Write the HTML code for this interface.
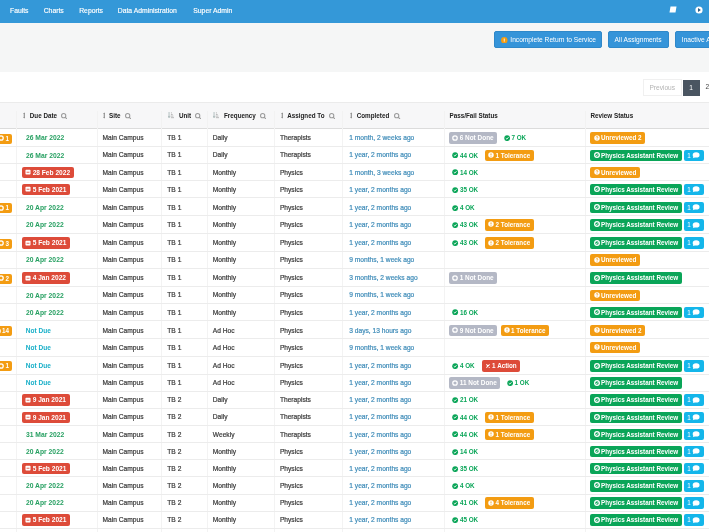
<!DOCTYPE html>
<html><head><meta charset="utf-8">
<style>
*{box-sizing:border-box;margin:0;padding:0}
html,body{width:709px;height:532px;overflow:hidden;background:#fff;-webkit-font-smoothing:antialiased;font-family:"Liberation Sans",sans-serif;color:#333}
.nav{position:absolute;left:0;top:0;width:709px;height:22.5px;background:#3498d8}
.nav span{position:absolute;top:6.8px;color:#fff;font-size:6.8px;line-height:8px;-webkit-text-stroke-width:0.15px}
.tool{position:absolute;left:0;top:22.5px;width:709px;height:49.6px;background:#f5f6f6}
.btn{position:absolute;top:31.4px;height:17px;background:#3594d9;border:1px solid #2f88c9;border-radius:2px;color:#fff;font-size:6.65px;line-height:15px;padding-left:6px;white-space:nowrap}
.pg{position:absolute;top:72px;left:0;width:709px;height:30.3px;background:#fff}
.prev{position:absolute;left:643px;top:79.2px;width:38.5px;height:17px;border:1px solid #f0f0f0;color:#b4b4b4;font-size:6.6px;line-height:15px;text-align:center;background:#fff}
.p1{position:absolute;left:682.5px;top:79.6px;width:17.2px;height:16.3px;background:#4a5561;color:#fff;font-size:6.6px;line-height:16px;text-align:center}
.p2{position:absolute;left:705.5px;top:79.4px;color:#444;font-size:6.6px;line-height:16px}
.hdr{position:absolute;left:0;top:102.3px;width:709px;height:26.7px;background:#f7f7f8;border-bottom:1px solid #dcdcdc;border-top:1px solid #ebebeb}
.hc{position:absolute;top:110.9px;font-size:6.3px;font-weight:bold;color:#222;line-height:9px;white-space:nowrap}
.row{position:absolute;left:0;width:709px;border-bottom:1px solid #ececec}
.c{position:absolute;top:0;height:100%;padding-left:5.5px;padding-top:0.5px;font-size:6.65px;line-height:inherit;white-space:nowrap;overflow:visible;color:#383838;-webkit-text-stroke-width:0.2px}
.vl{position:absolute;top:103px;height:436px;width:1px;background:linear-gradient(#f7f7f8 0,#f7f7f8 8px,#f2f2f2 8px,#f2f2f2 25px,#f3f3f3 25px)}
.hs{position:absolute;top:112.2px;width:2.6px;height:7px}
.ha{position:absolute;top:112.4px;width:6.2px;height:6.2px}
.hq{position:absolute;top:112.6px;width:6.4px;height:6.4px}
.lk{color:#3f8cb8;padding-left:6.5px}
.lb{display:inline-block;height:11.5px;line-height:11.5px;padding:0 3.6px;border-radius:2px;font-size:6.3px;font-weight:bold;vertical-align:middle;color:#fff;white-space:nowrap;position:relative;top:-0.4px;-webkit-text-stroke-width:0}
.i{width:6px;height:6px;vertical-align:-0.4px;margin-right:1.2px;margin-left:-0.3px}
.ic{width:8px;height:6.6px;vertical-align:-1px;margin-left:1.5px}
.okt{color:#0aa558;background:transparent}
.c7 .lb+.lb{margin-left:1.5px}
.okt .i{width:6.3px;height:6.3px;vertical-align:-1px}
.nd{background:#b4b8c5;color:#fff;font-size:6.45px}
.tol,.unrev{background:#f39c12}
.act,.dr{background:#dd4b39}
.par{background:#0aa558}
.cm{background:#14b6ea;font-weight:normal}
.dg{color:#27a062;background:transparent;font-size:6.75px;padding-left:3.8px}
.dr{font-size:6.6px}
.db{color:#18afc8;background:transparent;font-size:6.55px;padding-left:3.5px}
.dr{}
.lft{background:#f39c12;height:10px;line-height:10px;position:absolute;right:4.7px;top:4.9px;padding:0 2.4px 0 3px}
.c0{padding:0}
.c0{left:0px;width:16.2px}
.c1{left:16.2px;width:80.8px}
.c2{left:97px;width:64.8px}
.c3{left:161.8px;width:45.5px}
.c4{left:207.3px;width:67.1px}
.c5{left:274.4px;width:68.4px}
.c6{left:342.8px;width:101.7px}
.c7{left:444.5px;width:141.3px}
.c8{left:585.8px;width:123.2px}
.c7,.c8{padding-left:4.7px}
.c1{padding-left:6px}
</style></head><body><div id="w" style="position:absolute;left:0;top:0;width:709px;height:532px;will-change:transform">
<div class="nav">
<span style="left:10px">Faults</span>
<span style="left:43.7px">Charts</span>
<span style="left:79.2px">Reports</span>
<span style="left:117.8px">Data Administration</span>
<span style="left:193.3px">Super Admin</span>
<svg style="position:absolute;left:669px;top:6px" width="8" height="7" viewBox="0 0 8 7"><path d="M1.5 0.5 H7.5 L6.5 6.5 H0.5 Z" fill="#fff"/></svg>
<svg style="position:absolute;left:695px;top:6px" width="8" height="8" viewBox="0 0 8 8"><circle cx="4" cy="4" r="3.6" fill="#fff"/><path d="M3 2.1 L5.9 4 L3 5.9 Z" fill="#2d5f86"/></svg>
</div>
<div class="tool"></div>
<div class="btn" style="left:494.2px;width:108px"><svg style="width:6.5px;height:6.5px;vertical-align:-1px;margin-right:2.6px" viewBox="0 0 10 10"><circle cx="5" cy="5" r="5" fill="#f39c12"/><path d="M5 2.4 V6 M5 6.8 V7.8" stroke="#fff" stroke-width="1.4"/></svg>Incomplete Return to Service</div>
<div class="btn" style="left:607.6px;width:61.7px">All Assignments</div>
<div class="btn" style="left:674.8px;width:60px">Inactive Assignments</div>
<div class="pg"></div>
<div class="prev">Previous</div>
<div class="p1">1</div>
<div class="p2">2</div>
<div class="hdr"></div>
<div class="vl" style="left:15.7px"></div><div class="vl" style="left:96.5px"></div><div class="vl" style="left:161.3px"></div><div class="vl" style="left:206.8px"></div><div class="vl" style="left:273.9px"></div><div class="vl" style="left:342.3px"></div><div class="vl" style="left:444.0px"></div><div class="vl" style="left:585.3px"></div>
<svg class="hs" style="left:22.9px" viewBox="0 0 3 7"><path d="M1.5 0 L3 1.8 H0 Z M1.5 7 L3 5.2 H0 Z" fill="#909090"/><rect x="0.85" y="1.5" width="1.3" height="4" fill="#909090"/></svg><svg class="hq" style="left:61px" viewBox="0 0 6 6"><circle cx="2.5" cy="2.5" r="2" stroke="#9c9c9c" stroke-width="1" fill="none"/><path d="M3.9 3.9 L5.6 5.6" stroke="#9c9c9c" stroke-width="1.1"/></svg><svg class="hs" style="left:102.8px" viewBox="0 0 3 7"><path d="M1.5 0 L3 1.8 H0 Z M1.5 7 L3 5.2 H0 Z" fill="#909090"/><rect x="0.85" y="1.5" width="1.3" height="4" fill="#909090"/></svg><svg class="hq" style="left:125px" viewBox="0 0 6 6"><circle cx="2.5" cy="2.5" r="2" stroke="#9c9c9c" stroke-width="1" fill="none"/><path d="M3.9 3.9 L5.6 5.6" stroke="#9c9c9c" stroke-width="1.1"/></svg><svg class="ha" style="left:168.2px" viewBox="0 0 7 7"><path d="M1.2 0 V5.6 M0 4.4 L1.2 6.6 L2.4 4.4" stroke="#9aa" stroke-width="0.8" fill="none"/><path d="M3.3 1 H4.5 M3.3 2.8 H5.3 M3.3 4.6 H6.1 M3.3 6.4 H6.9" stroke="#aaa" stroke-width="0.9"/></svg><svg class="hq" style="left:195px" viewBox="0 0 6 6"><circle cx="2.5" cy="2.5" r="2" stroke="#9c9c9c" stroke-width="1" fill="none"/><path d="M3.9 3.9 L5.6 5.6" stroke="#9c9c9c" stroke-width="1.1"/></svg><svg class="ha" style="left:213.2px" viewBox="0 0 7 7"><path d="M1.2 0 V5.6 M0 4.4 L1.2 6.6 L2.4 4.4" stroke="#9aa" stroke-width="0.8" fill="none"/><path d="M3.3 1 H4.5 M3.3 2.8 H5.3 M3.3 4.6 H6.1 M3.3 6.4 H6.9" stroke="#aaa" stroke-width="0.9"/></svg><svg class="hq" style="left:260px" viewBox="0 0 6 6"><circle cx="2.5" cy="2.5" r="2" stroke="#9c9c9c" stroke-width="1" fill="none"/><path d="M3.9 3.9 L5.6 5.6" stroke="#9c9c9c" stroke-width="1.1"/></svg><svg class="hs" style="left:280.5px" viewBox="0 0 3 7"><path d="M1.5 0 L3 1.8 H0 Z M1.5 7 L3 5.2 H0 Z" fill="#909090"/><rect x="0.85" y="1.5" width="1.3" height="4" fill="#909090"/></svg><svg class="hq" style="left:329px" viewBox="0 0 6 6"><circle cx="2.5" cy="2.5" r="2" stroke="#9c9c9c" stroke-width="1" fill="none"/><path d="M3.9 3.9 L5.6 5.6" stroke="#9c9c9c" stroke-width="1.1"/></svg><svg class="hs" style="left:349.7px" viewBox="0 0 3 7"><path d="M1.5 0 L3 1.8 H0 Z M1.5 7 L3 5.2 H0 Z" fill="#909090"/><rect x="0.85" y="1.5" width="1.3" height="4" fill="#909090"/></svg><svg class="hq" style="left:394.3px" viewBox="0 0 6 6"><circle cx="2.5" cy="2.5" r="2" stroke="#9c9c9c" stroke-width="1" fill="none"/><path d="M3.9 3.9 L5.6 5.6" stroke="#9c9c9c" stroke-width="1.1"/></svg>
<div class="hc" style="left:29.8px">Due Date</div>
<div class="hc" style="left:109px">Site</div>
<div class="hc" style="left:178.9px">Unit</div>
<div class="hc" style="left:224px">Frequency</div>
<div class="hc" style="left:287.2px">Assigned To</div>
<div class="hc" style="left:356.7px">Completed</div>
<div class="hc" style="left:449.5px">Pass/Fail Status</div>
<div class="hc" style="left:590.5px">Review Status</div>
<div class="row" style="top:128.85px;height:18.11px;line-height:17.11px"><div class="c c0"><span class="lb lft"><svg class="i" viewBox="0 0 10 10"><circle cx="5" cy="5" r="3.7" stroke="#fff" stroke-width="2.1" fill="none"/></svg>1</span></div><div class="c c1"><span class="lb dg">26 Mar 2022</span></div><div class="c c2">Main Campus</div><div class="c c3">TB 1</div><div class="c c4">Daily</div><div class="c c5">Therapists</div><div class="c c6 lk">1 month, 2 weeks ago</div><div class="c c7"><span class="lb nd"><svg class="i" viewBox="0 0 10 10"><circle cx="5" cy="5" r="3.7" stroke="#fff" stroke-width="2.1" fill="none"/></svg>6 Not Done</span> <span class="lb okt"><svg class="i" viewBox="0 0 10 10"><circle cx="5" cy="5" r="4.6" fill="#0aa558"/><path d="M2.9 5.1 L4.4 6.5 L7.1 3.6" stroke="#fff" stroke-width="1.5" fill="none"/></svg>7 OK</span></div><div class="c c8"><span class="lb unrev"><svg class="i" viewBox="0 0 10 10"><circle cx="5" cy="5" r="4.6" fill="#fff"/><path d="M3.6 4 Q3.6 2.5 5 2.5 Q6.4 2.5 6.4 3.8 Q6.4 4.7 5 5.2 V5.9 M5 6.7 V7.8" stroke="#f39c12" stroke-width="1.3" fill="none"/></svg>Unreviewed 2</span></div></div><div class="row" style="top:146.96px;height:17.14px;line-height:16.14px"><div class="c c0"></div><div class="c c1"><span class="lb dg">26 Mar 2022</span></div><div class="c c2">Main Campus</div><div class="c c3">TB 1</div><div class="c c4">Daily</div><div class="c c5">Therapists</div><div class="c c6 lk">1 year, 2 months ago</div><div class="c c7"><span class="lb okt"><svg class="i" viewBox="0 0 10 10"><circle cx="5" cy="5" r="4.6" fill="#0aa558"/><path d="M2.9 5.1 L4.4 6.5 L7.1 3.6" stroke="#fff" stroke-width="1.5" fill="none"/></svg>44 OK</span> <span class="lb tol"><svg class="i" viewBox="0 0 10 10"><circle cx="5" cy="5" r="4.6" fill="#fff"/><path d="M5 2.4 V5.6 M5 6.6 V7.8" stroke="#f39c12" stroke-width="1.5"/></svg>1 Tolerance</span></div><div class="c c8"><span class="lb par"><svg class="i" viewBox="0 0 10 10"><circle cx="5" cy="5" r="3.9" stroke="#fff" stroke-width="2.2" fill="none"/><path d="M3.2 5 L4.5 6.2 L6.8 3.8" stroke="#fff" stroke-width="1.4" fill="none"/></svg>Physics Assistant Review</span> <span class="lb cm">1<svg class="ic" viewBox="0 0 12 10"><ellipse cx="6.2" cy="4.4" rx="5.2" ry="3.9" fill="#fff"/><path d="M2.2 6.5 L1.2 9.3 L4.8 7.6 Z" fill="#fff"/></svg></span></div></div><div class="row" style="top:164.10px;height:17.14px;line-height:16.14px"><div class="c c0"></div><div class="c c1"><span class="lb dr"><svg class="i" viewBox="0 0 10 10"><rect x="0.8" y="1.2" width="8.4" height="7.8" rx="1.2" fill="#fff"/><path d="M2.6 5.4 H7.4" stroke="#dd4b39" stroke-width="1.4"/></svg>28 Feb 2022</span></div><div class="c c2">Main Campus</div><div class="c c3">TB 1</div><div class="c c4">Monthly</div><div class="c c5">Physics</div><div class="c c6 lk">1 month, 3 weeks ago</div><div class="c c7"><span class="lb okt"><svg class="i" viewBox="0 0 10 10"><circle cx="5" cy="5" r="4.6" fill="#0aa558"/><path d="M2.9 5.1 L4.4 6.5 L7.1 3.6" stroke="#fff" stroke-width="1.5" fill="none"/></svg>14 OK</span></div><div class="c c8"><span class="lb unrev"><svg class="i" viewBox="0 0 10 10"><circle cx="5" cy="5" r="4.6" fill="#fff"/><path d="M3.6 4 Q3.6 2.5 5 2.5 Q6.4 2.5 6.4 3.8 Q6.4 4.7 5 5.2 V5.9 M5 6.7 V7.8" stroke="#f39c12" stroke-width="1.3" fill="none"/></svg>Unreviewed</span></div></div><div class="row" style="top:181.24px;height:17.14px;line-height:16.14px"><div class="c c0"></div><div class="c c1"><span class="lb dr"><svg class="i" viewBox="0 0 10 10"><rect x="0.8" y="1.2" width="8.4" height="7.8" rx="1.2" fill="#fff"/><path d="M2.6 5.4 H7.4" stroke="#dd4b39" stroke-width="1.4"/></svg>5 Feb 2021</span></div><div class="c c2">Main Campus</div><div class="c c3">TB 1</div><div class="c c4">Monthly</div><div class="c c5">Physics</div><div class="c c6 lk">1 year, 2 months ago</div><div class="c c7"><span class="lb okt"><svg class="i" viewBox="0 0 10 10"><circle cx="5" cy="5" r="4.6" fill="#0aa558"/><path d="M2.9 5.1 L4.4 6.5 L7.1 3.6" stroke="#fff" stroke-width="1.5" fill="none"/></svg>35 OK</span></div><div class="c c8"><span class="lb par"><svg class="i" viewBox="0 0 10 10"><circle cx="5" cy="5" r="3.9" stroke="#fff" stroke-width="2.2" fill="none"/><path d="M3.2 5 L4.5 6.2 L6.8 3.8" stroke="#fff" stroke-width="1.4" fill="none"/></svg>Physics Assistant Review</span> <span class="lb cm">1<svg class="ic" viewBox="0 0 12 10"><ellipse cx="6.2" cy="4.4" rx="5.2" ry="3.9" fill="#fff"/><path d="M2.2 6.5 L1.2 9.3 L4.8 7.6 Z" fill="#fff"/></svg></span></div></div><div class="row" style="top:198.38px;height:18.11px;line-height:17.11px"><div class="c c0"><span class="lb lft"><svg class="i" viewBox="0 0 10 10"><circle cx="5" cy="5" r="3.7" stroke="#fff" stroke-width="2.1" fill="none"/></svg>1</span></div><div class="c c1"><span class="lb dg">20 Apr 2022</span></div><div class="c c2">Main Campus</div><div class="c c3">TB 1</div><div class="c c4">Monthly</div><div class="c c5">Physics</div><div class="c c6 lk">1 year, 2 months ago</div><div class="c c7"><span class="lb okt"><svg class="i" viewBox="0 0 10 10"><circle cx="5" cy="5" r="4.6" fill="#0aa558"/><path d="M2.9 5.1 L4.4 6.5 L7.1 3.6" stroke="#fff" stroke-width="1.5" fill="none"/></svg>4 OK</span></div><div class="c c8"><span class="lb par"><svg class="i" viewBox="0 0 10 10"><circle cx="5" cy="5" r="3.9" stroke="#fff" stroke-width="2.2" fill="none"/><path d="M3.2 5 L4.5 6.2 L6.8 3.8" stroke="#fff" stroke-width="1.4" fill="none"/></svg>Physics Assistant Review</span> <span class="lb cm">1<svg class="ic" viewBox="0 0 12 10"><ellipse cx="6.2" cy="4.4" rx="5.2" ry="3.9" fill="#fff"/><path d="M2.2 6.5 L1.2 9.3 L4.8 7.6 Z" fill="#fff"/></svg></span></div></div><div class="row" style="top:216.49px;height:17.14px;line-height:16.14px"><div class="c c0"></div><div class="c c1"><span class="lb dg">20 Apr 2022</span></div><div class="c c2">Main Campus</div><div class="c c3">TB 1</div><div class="c c4">Monthly</div><div class="c c5">Physics</div><div class="c c6 lk">1 year, 2 months ago</div><div class="c c7"><span class="lb okt"><svg class="i" viewBox="0 0 10 10"><circle cx="5" cy="5" r="4.6" fill="#0aa558"/><path d="M2.9 5.1 L4.4 6.5 L7.1 3.6" stroke="#fff" stroke-width="1.5" fill="none"/></svg>43 OK</span> <span class="lb tol"><svg class="i" viewBox="0 0 10 10"><circle cx="5" cy="5" r="4.6" fill="#fff"/><path d="M5 2.4 V5.6 M5 6.6 V7.8" stroke="#f39c12" stroke-width="1.5"/></svg>2 Tolerance</span></div><div class="c c8"><span class="lb par"><svg class="i" viewBox="0 0 10 10"><circle cx="5" cy="5" r="3.9" stroke="#fff" stroke-width="2.2" fill="none"/><path d="M3.2 5 L4.5 6.2 L6.8 3.8" stroke="#fff" stroke-width="1.4" fill="none"/></svg>Physics Assistant Review</span> <span class="lb cm">1<svg class="ic" viewBox="0 0 12 10"><ellipse cx="6.2" cy="4.4" rx="5.2" ry="3.9" fill="#fff"/><path d="M2.2 6.5 L1.2 9.3 L4.8 7.6 Z" fill="#fff"/></svg></span></div></div><div class="row" style="top:233.63px;height:18.11px;line-height:17.11px"><div class="c c0"><span class="lb lft"><svg class="i" viewBox="0 0 10 10"><circle cx="5" cy="5" r="3.7" stroke="#fff" stroke-width="2.1" fill="none"/></svg>3</span></div><div class="c c1"><span class="lb dr"><svg class="i" viewBox="0 0 10 10"><rect x="0.8" y="1.2" width="8.4" height="7.8" rx="1.2" fill="#fff"/><path d="M2.6 5.4 H7.4" stroke="#dd4b39" stroke-width="1.4"/></svg>5 Feb 2021</span></div><div class="c c2">Main Campus</div><div class="c c3">TB 1</div><div class="c c4">Monthly</div><div class="c c5">Physics</div><div class="c c6 lk">1 year, 2 months ago</div><div class="c c7"><span class="lb okt"><svg class="i" viewBox="0 0 10 10"><circle cx="5" cy="5" r="4.6" fill="#0aa558"/><path d="M2.9 5.1 L4.4 6.5 L7.1 3.6" stroke="#fff" stroke-width="1.5" fill="none"/></svg>43 OK</span> <span class="lb tol"><svg class="i" viewBox="0 0 10 10"><circle cx="5" cy="5" r="4.6" fill="#fff"/><path d="M5 2.4 V5.6 M5 6.6 V7.8" stroke="#f39c12" stroke-width="1.5"/></svg>2 Tolerance</span></div><div class="c c8"><span class="lb par"><svg class="i" viewBox="0 0 10 10"><circle cx="5" cy="5" r="3.9" stroke="#fff" stroke-width="2.2" fill="none"/><path d="M3.2 5 L4.5 6.2 L6.8 3.8" stroke="#fff" stroke-width="1.4" fill="none"/></svg>Physics Assistant Review</span> <span class="lb cm">1<svg class="ic" viewBox="0 0 12 10"><ellipse cx="6.2" cy="4.4" rx="5.2" ry="3.9" fill="#fff"/><path d="M2.2 6.5 L1.2 9.3 L4.8 7.6 Z" fill="#fff"/></svg></span></div></div><div class="row" style="top:251.74px;height:17.14px;line-height:16.14px"><div class="c c0"></div><div class="c c1"><span class="lb dg">20 Apr 2022</span></div><div class="c c2">Main Campus</div><div class="c c3">TB 1</div><div class="c c4">Monthly</div><div class="c c5">Physics</div><div class="c c6 lk">9 months, 1 week ago</div><div class="c c7"></div><div class="c c8"><span class="lb unrev"><svg class="i" viewBox="0 0 10 10"><circle cx="5" cy="5" r="4.6" fill="#fff"/><path d="M3.6 4 Q3.6 2.5 5 2.5 Q6.4 2.5 6.4 3.8 Q6.4 4.7 5 5.2 V5.9 M5 6.7 V7.8" stroke="#f39c12" stroke-width="1.3" fill="none"/></svg>Unreviewed</span></div></div><div class="row" style="top:268.88px;height:18.11px;line-height:17.11px"><div class="c c0"><span class="lb lft"><svg class="i" viewBox="0 0 10 10"><circle cx="5" cy="5" r="3.7" stroke="#fff" stroke-width="2.1" fill="none"/></svg>2</span></div><div class="c c1"><span class="lb dr"><svg class="i" viewBox="0 0 10 10"><rect x="0.8" y="1.2" width="8.4" height="7.8" rx="1.2" fill="#fff"/><path d="M2.6 5.4 H7.4" stroke="#dd4b39" stroke-width="1.4"/></svg>4 Jan 2022</span></div><div class="c c2">Main Campus</div><div class="c c3">TB 1</div><div class="c c4">Monthly</div><div class="c c5">Physics</div><div class="c c6 lk">3 months, 2 weeks ago</div><div class="c c7"><span class="lb nd"><svg class="i" viewBox="0 0 10 10"><circle cx="5" cy="5" r="3.7" stroke="#fff" stroke-width="2.1" fill="none"/></svg>1 Not Done</span></div><div class="c c8"><span class="lb par"><svg class="i" viewBox="0 0 10 10"><circle cx="5" cy="5" r="3.9" stroke="#fff" stroke-width="2.2" fill="none"/><path d="M3.2 5 L4.5 6.2 L6.8 3.8" stroke="#fff" stroke-width="1.4" fill="none"/></svg>Physics Assistant Review</span></div></div><div class="row" style="top:286.99px;height:17.14px;line-height:16.14px"><div class="c c0"></div><div class="c c1"><span class="lb dg">20 Apr 2022</span></div><div class="c c2">Main Campus</div><div class="c c3">TB 1</div><div class="c c4">Monthly</div><div class="c c5">Physics</div><div class="c c6 lk">9 months, 1 week ago</div><div class="c c7"></div><div class="c c8"><span class="lb unrev"><svg class="i" viewBox="0 0 10 10"><circle cx="5" cy="5" r="4.6" fill="#fff"/><path d="M3.6 4 Q3.6 2.5 5 2.5 Q6.4 2.5 6.4 3.8 Q6.4 4.7 5 5.2 V5.9 M5 6.7 V7.8" stroke="#f39c12" stroke-width="1.3" fill="none"/></svg>Unreviewed</span></div></div><div class="row" style="top:304.13px;height:17.14px;line-height:16.14px"><div class="c c0"></div><div class="c c1"><span class="lb dg">20 Apr 2022</span></div><div class="c c2">Main Campus</div><div class="c c3">TB 1</div><div class="c c4">Monthly</div><div class="c c5">Physics</div><div class="c c6 lk">1 year, 2 months ago</div><div class="c c7"><span class="lb okt"><svg class="i" viewBox="0 0 10 10"><circle cx="5" cy="5" r="4.6" fill="#0aa558"/><path d="M2.9 5.1 L4.4 6.5 L7.1 3.6" stroke="#fff" stroke-width="1.5" fill="none"/></svg>16 OK</span></div><div class="c c8"><span class="lb par"><svg class="i" viewBox="0 0 10 10"><circle cx="5" cy="5" r="3.9" stroke="#fff" stroke-width="2.2" fill="none"/><path d="M3.2 5 L4.5 6.2 L6.8 3.8" stroke="#fff" stroke-width="1.4" fill="none"/></svg>Physics Assistant Review</span> <span class="lb cm">1<svg class="ic" viewBox="0 0 12 10"><ellipse cx="6.2" cy="4.4" rx="5.2" ry="3.9" fill="#fff"/><path d="M2.2 6.5 L1.2 9.3 L4.8 7.6 Z" fill="#fff"/></svg></span></div></div><div class="row" style="top:321.27px;height:18.11px;line-height:17.11px"><div class="c c0"><span class="lb lft"><svg class="i" viewBox="0 0 10 10"><circle cx="5" cy="5" r="3.7" stroke="#fff" stroke-width="2.1" fill="none"/></svg>14</span></div><div class="c c1"><span class="lb db">Not Due</span></div><div class="c c2">Main Campus</div><div class="c c3">TB 1</div><div class="c c4">Ad Hoc</div><div class="c c5">Physics</div><div class="c c6 lk">3 days, 13 hours ago</div><div class="c c7"><span class="lb nd"><svg class="i" viewBox="0 0 10 10"><circle cx="5" cy="5" r="3.7" stroke="#fff" stroke-width="2.1" fill="none"/></svg>9 Not Done</span> <span class="lb tol"><svg class="i" viewBox="0 0 10 10"><circle cx="5" cy="5" r="4.6" fill="#fff"/><path d="M5 2.4 V5.6 M5 6.6 V7.8" stroke="#f39c12" stroke-width="1.5"/></svg>1 Tolerance</span></div><div class="c c8"><span class="lb unrev"><svg class="i" viewBox="0 0 10 10"><circle cx="5" cy="5" r="4.6" fill="#fff"/><path d="M3.6 4 Q3.6 2.5 5 2.5 Q6.4 2.5 6.4 3.8 Q6.4 4.7 5 5.2 V5.9 M5 6.7 V7.8" stroke="#f39c12" stroke-width="1.3" fill="none"/></svg>Unreviewed 2</span></div></div><div class="row" style="top:339.38px;height:17.14px;line-height:16.14px"><div class="c c0"></div><div class="c c1"><span class="lb db">Not Due</span></div><div class="c c2">Main Campus</div><div class="c c3">TB 1</div><div class="c c4">Ad Hoc</div><div class="c c5">Physics</div><div class="c c6 lk">9 months, 1 week ago</div><div class="c c7"></div><div class="c c8"><span class="lb unrev"><svg class="i" viewBox="0 0 10 10"><circle cx="5" cy="5" r="4.6" fill="#fff"/><path d="M3.6 4 Q3.6 2.5 5 2.5 Q6.4 2.5 6.4 3.8 Q6.4 4.7 5 5.2 V5.9 M5 6.7 V7.8" stroke="#f39c12" stroke-width="1.3" fill="none"/></svg>Unreviewed</span></div></div><div class="row" style="top:356.52px;height:18.11px;line-height:17.11px"><div class="c c0"><span class="lb lft"><svg class="i" viewBox="0 0 10 10"><circle cx="5" cy="5" r="3.7" stroke="#fff" stroke-width="2.1" fill="none"/></svg>1</span></div><div class="c c1"><span class="lb db">Not Due</span></div><div class="c c2">Main Campus</div><div class="c c3">TB 1</div><div class="c c4">Ad Hoc</div><div class="c c5">Physics</div><div class="c c6 lk">1 year, 2 months ago</div><div class="c c7"><span class="lb okt"><svg class="i" viewBox="0 0 10 10"><circle cx="5" cy="5" r="4.6" fill="#0aa558"/><path d="M2.9 5.1 L4.4 6.5 L7.1 3.6" stroke="#fff" stroke-width="1.5" fill="none"/></svg>4 OK</span> <span class="lb act"><svg class="i" viewBox="0 0 10 10"><path d="M2.3 2.3 L7.7 7.7 M7.7 2.3 L2.3 7.7" stroke="#fff" stroke-width="1.7"/></svg>1 Action</span></div><div class="c c8"><span class="lb par"><svg class="i" viewBox="0 0 10 10"><circle cx="5" cy="5" r="3.9" stroke="#fff" stroke-width="2.2" fill="none"/><path d="M3.2 5 L4.5 6.2 L6.8 3.8" stroke="#fff" stroke-width="1.4" fill="none"/></svg>Physics Assistant Review</span> <span class="lb cm">1<svg class="ic" viewBox="0 0 12 10"><ellipse cx="6.2" cy="4.4" rx="5.2" ry="3.9" fill="#fff"/><path d="M2.2 6.5 L1.2 9.3 L4.8 7.6 Z" fill="#fff"/></svg></span></div></div><div class="row" style="top:374.63px;height:17.14px;line-height:16.14px"><div class="c c0"></div><div class="c c1"><span class="lb db">Not Due</span></div><div class="c c2">Main Campus</div><div class="c c3">TB 1</div><div class="c c4">Ad Hoc</div><div class="c c5">Physics</div><div class="c c6 lk">1 year, 2 months ago</div><div class="c c7"><span class="lb nd"><svg class="i" viewBox="0 0 10 10"><circle cx="5" cy="5" r="3.7" stroke="#fff" stroke-width="2.1" fill="none"/></svg>11 Not Done</span> <span class="lb okt"><svg class="i" viewBox="0 0 10 10"><circle cx="5" cy="5" r="4.6" fill="#0aa558"/><path d="M2.9 5.1 L4.4 6.5 L7.1 3.6" stroke="#fff" stroke-width="1.5" fill="none"/></svg>1 OK</span></div><div class="c c8"><span class="lb par"><svg class="i" viewBox="0 0 10 10"><circle cx="5" cy="5" r="3.9" stroke="#fff" stroke-width="2.2" fill="none"/><path d="M3.2 5 L4.5 6.2 L6.8 3.8" stroke="#fff" stroke-width="1.4" fill="none"/></svg>Physics Assistant Review</span></div></div><div class="row" style="top:391.77px;height:17.14px;line-height:16.14px"><div class="c c0"></div><div class="c c1"><span class="lb dr"><svg class="i" viewBox="0 0 10 10"><rect x="0.8" y="1.2" width="8.4" height="7.8" rx="1.2" fill="#fff"/><path d="M2.6 5.4 H7.4" stroke="#dd4b39" stroke-width="1.4"/></svg>9 Jan 2021</span></div><div class="c c2">Main Campus</div><div class="c c3">TB 2</div><div class="c c4">Daily</div><div class="c c5">Therapists</div><div class="c c6 lk">1 year, 2 months ago</div><div class="c c7"><span class="lb okt"><svg class="i" viewBox="0 0 10 10"><circle cx="5" cy="5" r="4.6" fill="#0aa558"/><path d="M2.9 5.1 L4.4 6.5 L7.1 3.6" stroke="#fff" stroke-width="1.5" fill="none"/></svg>21 OK</span></div><div class="c c8"><span class="lb par"><svg class="i" viewBox="0 0 10 10"><circle cx="5" cy="5" r="3.9" stroke="#fff" stroke-width="2.2" fill="none"/><path d="M3.2 5 L4.5 6.2 L6.8 3.8" stroke="#fff" stroke-width="1.4" fill="none"/></svg>Physics Assistant Review</span> <span class="lb cm">1<svg class="ic" viewBox="0 0 12 10"><ellipse cx="6.2" cy="4.4" rx="5.2" ry="3.9" fill="#fff"/><path d="M2.2 6.5 L1.2 9.3 L4.8 7.6 Z" fill="#fff"/></svg></span></div></div><div class="row" style="top:408.91px;height:17.14px;line-height:16.14px"><div class="c c0"></div><div class="c c1"><span class="lb dr"><svg class="i" viewBox="0 0 10 10"><rect x="0.8" y="1.2" width="8.4" height="7.8" rx="1.2" fill="#fff"/><path d="M2.6 5.4 H7.4" stroke="#dd4b39" stroke-width="1.4"/></svg>9 Jan 2021</span></div><div class="c c2">Main Campus</div><div class="c c3">TB 2</div><div class="c c4">Daily</div><div class="c c5">Therapists</div><div class="c c6 lk">1 year, 2 months ago</div><div class="c c7"><span class="lb okt"><svg class="i" viewBox="0 0 10 10"><circle cx="5" cy="5" r="4.6" fill="#0aa558"/><path d="M2.9 5.1 L4.4 6.5 L7.1 3.6" stroke="#fff" stroke-width="1.5" fill="none"/></svg>44 OK</span> <span class="lb tol"><svg class="i" viewBox="0 0 10 10"><circle cx="5" cy="5" r="4.6" fill="#fff"/><path d="M5 2.4 V5.6 M5 6.6 V7.8" stroke="#f39c12" stroke-width="1.5"/></svg>1 Tolerance</span></div><div class="c c8"><span class="lb par"><svg class="i" viewBox="0 0 10 10"><circle cx="5" cy="5" r="3.9" stroke="#fff" stroke-width="2.2" fill="none"/><path d="M3.2 5 L4.5 6.2 L6.8 3.8" stroke="#fff" stroke-width="1.4" fill="none"/></svg>Physics Assistant Review</span> <span class="lb cm">1<svg class="ic" viewBox="0 0 12 10"><ellipse cx="6.2" cy="4.4" rx="5.2" ry="3.9" fill="#fff"/><path d="M2.2 6.5 L1.2 9.3 L4.8 7.6 Z" fill="#fff"/></svg></span></div></div><div class="row" style="top:426.05px;height:17.14px;line-height:16.14px"><div class="c c0"></div><div class="c c1"><span class="lb dg">31 Mar 2022</span></div><div class="c c2">Main Campus</div><div class="c c3">TB 2</div><div class="c c4">Weekly</div><div class="c c5">Therapists</div><div class="c c6 lk">1 year, 2 months ago</div><div class="c c7"><span class="lb okt"><svg class="i" viewBox="0 0 10 10"><circle cx="5" cy="5" r="4.6" fill="#0aa558"/><path d="M2.9 5.1 L4.4 6.5 L7.1 3.6" stroke="#fff" stroke-width="1.5" fill="none"/></svg>44 OK</span> <span class="lb tol"><svg class="i" viewBox="0 0 10 10"><circle cx="5" cy="5" r="4.6" fill="#fff"/><path d="M5 2.4 V5.6 M5 6.6 V7.8" stroke="#f39c12" stroke-width="1.5"/></svg>1 Tolerance</span></div><div class="c c8"><span class="lb par"><svg class="i" viewBox="0 0 10 10"><circle cx="5" cy="5" r="3.9" stroke="#fff" stroke-width="2.2" fill="none"/><path d="M3.2 5 L4.5 6.2 L6.8 3.8" stroke="#fff" stroke-width="1.4" fill="none"/></svg>Physics Assistant Review</span> <span class="lb cm">1<svg class="ic" viewBox="0 0 12 10"><ellipse cx="6.2" cy="4.4" rx="5.2" ry="3.9" fill="#fff"/><path d="M2.2 6.5 L1.2 9.3 L4.8 7.6 Z" fill="#fff"/></svg></span></div></div><div class="row" style="top:443.19px;height:17.14px;line-height:16.14px"><div class="c c0"></div><div class="c c1"><span class="lb dg">20 Apr 2022</span></div><div class="c c2">Main Campus</div><div class="c c3">TB 2</div><div class="c c4">Monthly</div><div class="c c5">Physics</div><div class="c c6 lk">1 year, 2 months ago</div><div class="c c7"><span class="lb okt"><svg class="i" viewBox="0 0 10 10"><circle cx="5" cy="5" r="4.6" fill="#0aa558"/><path d="M2.9 5.1 L4.4 6.5 L7.1 3.6" stroke="#fff" stroke-width="1.5" fill="none"/></svg>14 OK</span></div><div class="c c8"><span class="lb par"><svg class="i" viewBox="0 0 10 10"><circle cx="5" cy="5" r="3.9" stroke="#fff" stroke-width="2.2" fill="none"/><path d="M3.2 5 L4.5 6.2 L6.8 3.8" stroke="#fff" stroke-width="1.4" fill="none"/></svg>Physics Assistant Review</span> <span class="lb cm">1<svg class="ic" viewBox="0 0 12 10"><ellipse cx="6.2" cy="4.4" rx="5.2" ry="3.9" fill="#fff"/><path d="M2.2 6.5 L1.2 9.3 L4.8 7.6 Z" fill="#fff"/></svg></span></div></div><div class="row" style="top:460.33px;height:17.14px;line-height:16.14px"><div class="c c0"></div><div class="c c1"><span class="lb dr"><svg class="i" viewBox="0 0 10 10"><rect x="0.8" y="1.2" width="8.4" height="7.8" rx="1.2" fill="#fff"/><path d="M2.6 5.4 H7.4" stroke="#dd4b39" stroke-width="1.4"/></svg>5 Feb 2021</span></div><div class="c c2">Main Campus</div><div class="c c3">TB 2</div><div class="c c4">Monthly</div><div class="c c5">Physics</div><div class="c c6 lk">1 year, 2 months ago</div><div class="c c7"><span class="lb okt"><svg class="i" viewBox="0 0 10 10"><circle cx="5" cy="5" r="4.6" fill="#0aa558"/><path d="M2.9 5.1 L4.4 6.5 L7.1 3.6" stroke="#fff" stroke-width="1.5" fill="none"/></svg>35 OK</span></div><div class="c c8"><span class="lb par"><svg class="i" viewBox="0 0 10 10"><circle cx="5" cy="5" r="3.9" stroke="#fff" stroke-width="2.2" fill="none"/><path d="M3.2 5 L4.5 6.2 L6.8 3.8" stroke="#fff" stroke-width="1.4" fill="none"/></svg>Physics Assistant Review</span> <span class="lb cm">1<svg class="ic" viewBox="0 0 12 10"><ellipse cx="6.2" cy="4.4" rx="5.2" ry="3.9" fill="#fff"/><path d="M2.2 6.5 L1.2 9.3 L4.8 7.6 Z" fill="#fff"/></svg></span></div></div><div class="row" style="top:477.47px;height:17.14px;line-height:16.14px"><div class="c c0"></div><div class="c c1"><span class="lb dg">20 Apr 2022</span></div><div class="c c2">Main Campus</div><div class="c c3">TB 2</div><div class="c c4">Monthly</div><div class="c c5">Physics</div><div class="c c6 lk">1 year, 2 months ago</div><div class="c c7"><span class="lb okt"><svg class="i" viewBox="0 0 10 10"><circle cx="5" cy="5" r="4.6" fill="#0aa558"/><path d="M2.9 5.1 L4.4 6.5 L7.1 3.6" stroke="#fff" stroke-width="1.5" fill="none"/></svg>4 OK</span></div><div class="c c8"><span class="lb par"><svg class="i" viewBox="0 0 10 10"><circle cx="5" cy="5" r="3.9" stroke="#fff" stroke-width="2.2" fill="none"/><path d="M3.2 5 L4.5 6.2 L6.8 3.8" stroke="#fff" stroke-width="1.4" fill="none"/></svg>Physics Assistant Review</span> <span class="lb cm">1<svg class="ic" viewBox="0 0 12 10"><ellipse cx="6.2" cy="4.4" rx="5.2" ry="3.9" fill="#fff"/><path d="M2.2 6.5 L1.2 9.3 L4.8 7.6 Z" fill="#fff"/></svg></span></div></div><div class="row" style="top:494.61px;height:17.14px;line-height:16.14px"><div class="c c0"></div><div class="c c1"><span class="lb dg">20 Apr 2022</span></div><div class="c c2">Main Campus</div><div class="c c3">TB 2</div><div class="c c4">Monthly</div><div class="c c5">Physics</div><div class="c c6 lk">1 year, 2 months ago</div><div class="c c7"><span class="lb okt"><svg class="i" viewBox="0 0 10 10"><circle cx="5" cy="5" r="4.6" fill="#0aa558"/><path d="M2.9 5.1 L4.4 6.5 L7.1 3.6" stroke="#fff" stroke-width="1.5" fill="none"/></svg>41 OK</span> <span class="lb tol"><svg class="i" viewBox="0 0 10 10"><circle cx="5" cy="5" r="4.6" fill="#fff"/><path d="M5 2.4 V5.6 M5 6.6 V7.8" stroke="#f39c12" stroke-width="1.5"/></svg>4 Tolerance</span></div><div class="c c8"><span class="lb par"><svg class="i" viewBox="0 0 10 10"><circle cx="5" cy="5" r="3.9" stroke="#fff" stroke-width="2.2" fill="none"/><path d="M3.2 5 L4.5 6.2 L6.8 3.8" stroke="#fff" stroke-width="1.4" fill="none"/></svg>Physics Assistant Review</span> <span class="lb cm">1<svg class="ic" viewBox="0 0 12 10"><ellipse cx="6.2" cy="4.4" rx="5.2" ry="3.9" fill="#fff"/><path d="M2.2 6.5 L1.2 9.3 L4.8 7.6 Z" fill="#fff"/></svg></span></div></div><div class="row" style="top:511.75px;height:17.14px;line-height:16.14px"><div class="c c0"></div><div class="c c1"><span class="lb dr"><svg class="i" viewBox="0 0 10 10"><rect x="0.8" y="1.2" width="8.4" height="7.8" rx="1.2" fill="#fff"/><path d="M2.6 5.4 H7.4" stroke="#dd4b39" stroke-width="1.4"/></svg>5 Feb 2021</span></div><div class="c c2">Main Campus</div><div class="c c3">TB 2</div><div class="c c4">Monthly</div><div class="c c5">Physics</div><div class="c c6 lk">1 year, 2 months ago</div><div class="c c7"><span class="lb okt"><svg class="i" viewBox="0 0 10 10"><circle cx="5" cy="5" r="4.6" fill="#0aa558"/><path d="M2.9 5.1 L4.4 6.5 L7.1 3.6" stroke="#fff" stroke-width="1.5" fill="none"/></svg>45 OK</span></div><div class="c c8"><span class="lb par"><svg class="i" viewBox="0 0 10 10"><circle cx="5" cy="5" r="3.9" stroke="#fff" stroke-width="2.2" fill="none"/><path d="M3.2 5 L4.5 6.2 L6.8 3.8" stroke="#fff" stroke-width="1.4" fill="none"/></svg>Physics Assistant Review</span> <span class="lb cm">1<svg class="ic" viewBox="0 0 12 10"><ellipse cx="6.2" cy="4.4" rx="5.2" ry="3.9" fill="#fff"/><path d="M2.2 6.5 L1.2 9.3 L4.8 7.6 Z" fill="#fff"/></svg></span></div></div>
</div></body></html>
